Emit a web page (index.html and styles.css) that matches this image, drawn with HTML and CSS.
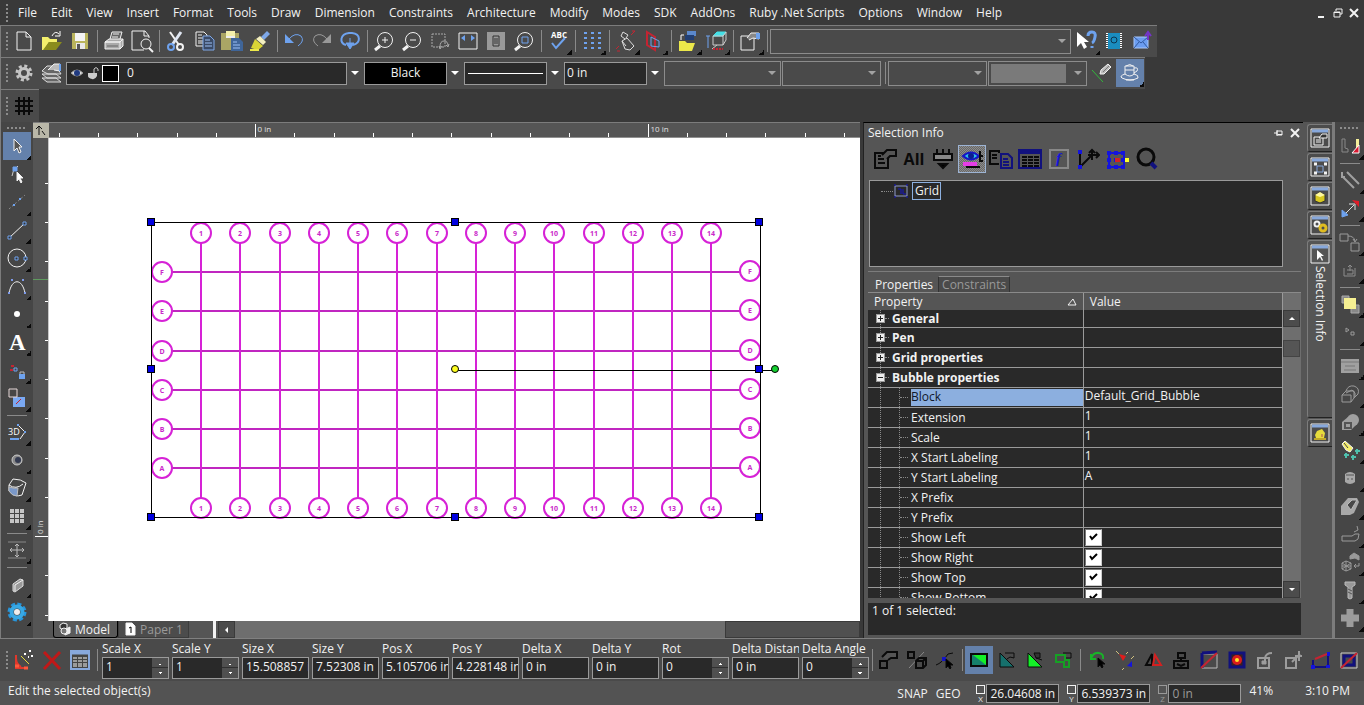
FILE: index.html
```html
<!DOCTYPE html>
<html lang="en">
<head>
  <meta charset="UTF-8">
  <title>Grid drawing</title>
  <link rel="stylesheet" href="styles.css">
</head>
<body>

  <header class="menubar">
    <span class="grip"></span>
    <nav class="menu">
      <a href="#">File</a>
      <a href="#">Edit</a>
      <a href="#">View</a>
      <a href="#">Insert</a>
      <a href="#">Format</a>
      <a href="#">Tools</a>
      <a href="#">Draw</a>
      <a href="#">Dimension</a>
      <a href="#">Constraints</a>
      <a href="#">Architecture</a>
      <a href="#">Modify</a>
      <a href="#">Modes</a>
      <a href="#">SDK</a>
      <a href="#">AddOns</a>
      <a href="#">Ruby .Net Scripts</a>
      <a href="#">Options</a>
      <a href="#">Window</a>
      <a href="#">Help</a>
    </nav>
    <div class="window-buttons">
      <button aria-label="Minimize"><svg viewBox="0 0 12 12"><path d="M2 10h6" stroke-width="2"/></svg></button>
      <button aria-label="Restore"><svg viewBox="0 0 12 12"><path d="M4 4V2h6v5H8M2 5h6v5H2zM2 5.500h6"/></svg></button>
      <button aria-label="Close"><svg viewBox="0 0 12 12"><path d="M2 2l8 8M10 2l-8 8" stroke-width="2"/></svg></button>
    </div>
  </header>

  <!-- standard toolbar -->
  <div class="toolbar">
    <span class="grip"></span>
    <button class="tool" aria-label="New"><svg viewBox="0 0 24 24"><path d="M5 3h9l5 5v13H5zM14 3v5h5"/></svg></button>
    <button class="tool" aria-label="Open"><svg viewBox="0 0 24 24" stroke="none"><path d="M2 8h6l2 2h7v3H9l-5 8H2z" fill="#f3ef6c"/><path d="M9 13h13l-6 8H3z" fill="#8a8c1c"/><path d="M12 7q3-6 7-2M20 2v5h-5" stroke="#fff"/></svg></button>
    <button class="tool" aria-label="Save"><svg viewBox="0 0 24 24" stroke="none"><path d="M4 4h16v16H4z" fill="#b9b45c"/><path d="M7 4h10v8H7z" fill="#f4f4f4"/><path d="M8 14h9v6H8z" fill="#e8e8e8"/><path d="M9 15h3v5H9z" fill="#555"/></svg></button>
    <span class="sep"></span>
    <button class="tool" aria-label="Print"><svg viewBox="0 0 24 24"><path d="M8 10l2-7h10l-2 7" fill="#666"/><path d="M3 13l4-3h14l-3 3zM3 13h15v7H3zM18 13l3-3v7l-3 3" fill="#aaa"/><path d="M11 5h6M10 8h6" stroke="#eee"/><path d="M5 17h11" stroke="#666"/></svg></button>
    <button class="tool" aria-label="Print preview"><svg viewBox="0 0 24 24"><path d="M19 9V7l-4-5H2v19h12M14 2v5h5"/><circle cx="16" cy="15" r="5"/><path d="M19 19l4 4" stroke-width="2"/></svg></button>
    <span class="sep"></span>
    <button class="tool" aria-label="Cut"><svg viewBox="0 0 24 24"><path d="M6 3l9 13" stroke-width="2"/><path d="M17 3L8 16" stroke="#dfe6f2" stroke-width="3"/><circle cx="7" cy="18" r="3" stroke="#6ea2ee" stroke-width="2"/><circle cx="16" cy="18" r="3" stroke-width="2"/></svg></button>
    <button class="tool" aria-label="Copy"><svg viewBox="0 0 24 24"><path d="M4 3h8l3 3v11H4z" fill="#444"/><path d="M6 6h4M6 9h6M6 12h6M6 14h6"/><path d="M11 7h7l4 4v10H11z" fill="#3a4a66" stroke="#7ea8e8"/><path d="M13 11h5M13 14h7M13 17h7" stroke="#9cc0f5"/></svg></button>
    <button class="tool" aria-label="Paste"><svg viewBox="0 0 24 24" stroke="none"><path d="M1 4h18v17H1z" fill="#aaa565"/><path d="M6 2h9v6H6z" fill="#f3efab"/><path d="M6 8h9" stroke="#eee" stroke-width="2"/><path d="M11 9h8l4 4v9H11z" fill="#3f6599"/><path d="M13 13h4M13 16h7M13 19h7" stroke="#9cc0f5"/></svg></button>
    <button class="tool" aria-label="Format painter"><svg viewBox="0 0 24 24" stroke="none"><path d="M19 2l3 3-6 6-3-3z" fill="#7ea8e8"/><path d="M12 7l6 6-3 3-7-6z" fill="#f3efc0"/><path d="M7 10l8 7-5 4-7-2z" fill="#d9d436"/><path d="M2 21h9" stroke="#ece84a" stroke-width="2"/></svg></button>
    <span class="sep"></span>
    <button class="tool" aria-label="Undo"><svg viewBox="0 0 24 24"><path d="M3 5v9h9z" fill="#6ea2ee" stroke="none"/><path d="M7 10q6-7 12-3 4 5-3 10" stroke="#6ea2ee"/></svg></button>
    <button class="tool" aria-label="Redo"><svg viewBox="0 0 24 24"><path d="M21 5v9h-9z" fill="#999" stroke="none"/><path d="M17 10q-6-7-12-3-4 5 3 10" stroke="#999"/></svg></button>
    <button class="tool" aria-label="Repeat"><svg viewBox="0 0 24 24"><path d="M8 16C1 14 2 5 11 4h3c9 1 9 10 1 12" stroke="#6ea2ee" stroke-width="2"/><path d="M12 9v10M8 14h8l-4 6z" fill="#6ea2ee" stroke="#6ea2ee"/></svg></button>
    <span class="sep"></span>
    <button class="tool" aria-label="Zoom in"><svg viewBox="0 0 24 24"><circle cx="13" cy="11" r="7.500"/><path d="M8 17l-5 4" stroke-width="3"/><path d="M10 11h6M13 8v6"/></svg></button>
    <button class="tool" aria-label="Zoom out"><svg viewBox="0 0 24 24"><circle cx="13" cy="11" r="7.500"/><path d="M8 17l-5 4" stroke-width="3"/><path d="M10 11h6"/></svg></button>
    <button class="tool" aria-label="Zoom window"><svg viewBox="0 0 24 24" stroke="#aaa"><path d="M4 5h13v13H4z" stroke-dasharray="2 1"/><path d="M12 18q0-6 4-6t4 5M18 16l2 2 1-3M11 17l1 3 2-3"/></svg></button>
    <button class="tool" aria-label="Zoom extents"><svg viewBox="0 0 24 24"><path d="M3 4h18v16H3z"/><path d="M5 9l4-3v6zM19 9l-4-3v6z" fill="#6ea2ee" stroke="none"/></svg></button>
    <button class="tool" aria-label="Zoom page"><svg viewBox="0 0 24 24" stroke="none"><path d="M3 3h18v18H3z" fill="#999"/><path d="M9 7h6v10H9zM10 10h4M10 12h4M10 14h4" stroke="#333"/></svg></button>
    <button class="tool" aria-label="Zoom selection"><svg viewBox="0 0 24 24"><circle cx="13" cy="11" r="7.500"/><path d="M8 17l-5 4" stroke-width="3"/><path d="M10 8h6v6h-6z" stroke="#6ea2ee"/></svg></button>
    <span class="sep"></span>
    <button class="tool fly" aria-label="Spelling"><svg viewBox="0 0 24 24"><text x="5" y="9" font-size="8" font-weight="700">ABC</text><path d="M6 14l4 5 9-10" stroke="#6ea2ee" stroke-width="2"/></svg></button>
    <span class="sep"></span>
    <button class="tool fly" aria-label="Snap grid"><svg viewBox="0 0 24 24"><path d="M4 4h17M4 9h17M4 14h17M4 19h17" stroke="#6ea2ee" stroke-width="2" stroke-dasharray="3 4"/></svg></button>
    <span class="sep"></span>
    <button class="tool fly" aria-label="Unlink"><svg viewBox="0 0 24 24"><path d="M8 12l5-3 7 8-4 4-5-1zM11 10L7 7l2-4 5 3-2 3M8 12l4 5" stroke="#ddd"/><path d="M17 6l4-4M21 2h-3M2 20l3-3M3 22h3" stroke="#c42432"/></svg></button>
    <button class="tool fly" aria-label="Mirror plane"><svg viewBox="0 0 24 24"><path d="M5 3l8 5v13l-8-5z" stroke="#c42432" stroke-width="2"/><path d="M9 8l8 4v6l-8-1z" stroke="#6ea2ee"/></svg></button>
    <span class="sep"></span>
    <button class="tool fly" aria-label="Library"><svg viewBox="0 0 24 24" stroke="none"><path d="M3 12h6l2 2h8l-3 8H3z" fill="#ece84a"/><path d="M11 2h9v5h-9z" fill="#5b88cc"/><path d="M9 6h9v5H9z" fill="#223f73"/><path d="M5 11V6h3" stroke="#fff"/></svg></button>
    <button class="tool fly" aria-label="Work plane"><svg viewBox="0 0 24 24"><path d="M9 7l4-4h9l-3 4z" fill="#45e0e6" stroke="#45e0e6"/><path d="M9 7h10v9H9zM19 7l3-4v8l-3 5M13 16l-5 4" stroke="#ccc"/><path d="M4 7v12M2 7h4" stroke="#6ea2ee"/><path d="M9 20h10" stroke="#c42432" stroke-width="2" stroke-dasharray="2 1"/></svg></button>
    <span class="sep"></span>
    <button class="tool fly" aria-label="Properties"><svg viewBox="0 0 24 24"><path d="M3 7h13v14H3z"/><path d="M9 9l4-5h8v6l-6-1-4 2" fill="#888"/><path d="M18 4h4v6h-4z" fill="#6ea2ee" stroke="none"/></svg></button>
    <span class="sep"></span>
    <label class="combo combo-style"><select aria-label="Style"><option></option></select></label>
    <button class="tool fly" aria-label="Context help"><svg viewBox="0 0 24 24" stroke="none"><path d="M3 3v15l4-4 3 6 3-2-3-5h5z" fill="#fff"/><path d="M14 7q0-4 4-4t3 5-3 6M18 17v2" stroke="#6ea2ee" stroke-width="3"/></svg></button>
    <button class="tool" aria-label="Handbook"><svg viewBox="0 0 24 24" stroke="none"><path d="M6 4h12v16H6z" fill="#1a8dc0"/><path d="M5 4v16M19 4v16" stroke="#fff" stroke-width="2" stroke-dasharray="1 1"/><circle cx="12" cy="11" r="3" stroke="#0c3550"/></svg></button>
    <button class="tool" aria-label="Send"><svg viewBox="0 0 24 24"><path d="M4 8h14v11H4z" fill="#6b9df0" stroke="#a9c7fa"/><path d="M4 8l7 6 7-6M4 19l5-6M18 19l-5-6" stroke="#31599f"/><path d="M18 11V5M15 7l3-4 3 4" stroke="#7334c9" stroke-width="2"/></svg></button>
  </div>

  <!-- layer and pen toolbar -->
  <div class="toolbar">
    <span class="grip"></span>
    <button class="tool" aria-label="Settings"><svg viewBox="0 0 24 24" stroke="#c4c4c4"><circle cx="12" cy="12" r="4.500" stroke-width="3"/><circle cx="12" cy="12" r="7" stroke-width="3" stroke-dasharray="3 2.500"/></svg></button>
    <button class="tool" aria-label="Layers"><svg viewBox="0 0 24 24"><path d="M2 17l5 4h14l-5-4zM2 13l5 4h14l-5-4zM2 10l5-5h9l5 8H8z" fill="#666" stroke="#ddd"/><path d="M8 9l6-6h6v7l-6-1" fill="#bbb"/><path d="M20 3v7" stroke="#6ea2ee" stroke-width="2"/></svg></button>
    <div class="layer">
      <svg viewBox="0 0 14 14"><path d="M1 7q6-6 12 0-6 6-12 0z" fill="#ddd" stroke="#999"/><circle cx="7" cy="7" r="3" fill="#203a80" stroke="none"/></svg>
      <svg viewBox="0 0 14 14"><path d="M8 7V3q2-3 4 0v2" stroke="#ccc"/><path d="M2 7h9v3q-2 4-5 3-4-1-4-3z" fill="#ccc" stroke="none"/></svg>
      <span class="swatch"></span>
      <select aria-label="Layer"><option>0</option></select>
    </div>
    <span class="arrow"></span>
    <label class="pen"><select class="pen-color" aria-label="Pen color"><option>Black</option></select></label>
    <span class="arrow"></span>
    <button class="pen pen-line" aria-label="Line style"><span></span></button>
    <span class="arrow"></span>
    <label class="pen"><select aria-label="Pen width"><option>0 in</option></select></label>
    <span class="arrow"></span>
    <label class="combo combo-wide"><select disabled aria-label="Hatch"><option></option></select></label>
    <label class="combo"><select disabled aria-label="Hatch scale"><option></option></select></label>
    <span class="sep"></span>
    <label class="combo"><select disabled aria-label="Brush"><option></option></select></label>
    <label class="combo combo-fill"><select disabled aria-label="Fill"><option></option></select></label>
    <button class="tool" aria-label="Sketch"><svg viewBox="0 0 24 24"><path d="M2 9l11 12" stroke="#32b93c"/><path d="M10 13l1-4 7-6 3 3-7 7z" fill="#bbb"/><path d="M13 11l6-6" stroke="#777"/></svg></button>
    <button class="tool fly active" aria-label="Render"><svg viewBox="0 0 24 24"><path d="M7 5h9v8q-4 4-9 0zM16 7q5-1 3 3l-3 2M7 9h9M8 5q4-3 7 0"/><path d="M7 13q-6 2-3 4 8 4 16 0 1-3-4-4M8 19h8"/></svg></button>
  </div>

  <div class="toolbar toolbar-grid">
    <span class="grip"></span>
    <button class="tool" aria-label="Grid"><svg viewBox="0 0 24 24" stroke="#0a0a0a"><path d="M7 3v18M12 3v18M17 3v18M3 7h18M3 12h18M3 17h18" stroke-width="2"/></svg></button>
  </div>

  <main class="workspace">

    <div class="side-toolbar">
      <span class="grip grip-flat"></span>
      <button class="tool fly active" aria-label="Select"><svg viewBox="0 0 24 24"><path d="M9 5v12l3-3 2 5 2-1-2-5h3z" fill="#555"/></svg></button>
      <button class="tool" aria-label="Edit node"><svg viewBox="0 0 24 24"><path d="M7 14q0-6 6-10" stroke="#ccc"/><path d="M8 5h4v4H8z" fill="#6ea2ee" stroke="#6ea2ee"/><path d="M12 10v9l2-2 2 4 1-1-2-4h3z" fill="#fff"/></svg></button>
      <button class="tool fly" aria-label="Construction"><svg viewBox="0 0 24 24"><path d="M4 19L20 5" stroke="#888" stroke-dasharray="2 2"/><path d="M8 15h2M14 9h2" stroke="#6ea2ee" stroke-width="2"/></svg></button>
      <button class="tool fly" aria-label="Line"><svg viewBox="0 0 24 24"><path d="M4 20L20 5"/><path d="M3 18h3v3H3zM18 4h3v3h-3z" fill="#333" stroke="#6ea2ee"/></svg></button>
      <button class="tool fly" aria-label="Circle"><svg viewBox="0 0 24 24"><circle cx="12" cy="12" r="9"/><path d="M10 11h3v3h-3zM19 11h3v3h-3z" fill="#333" stroke="#6ea2ee"/></svg></button>
      <button class="tool fly" aria-label="Curve"><svg viewBox="0 0 24 24"><path d="M4 19C7 4 17 4 20 19"/><path d="M6 6h2M17 6h2M3 19h2M19 19h2" stroke="#7f9bea" stroke-width="2"/></svg></button>
      <button class="tool fly" aria-label="Point"><svg viewBox="0 0 24 24"><circle cx="12" cy="12" r="3" fill="#fff" stroke="none"/></svg></button>
      <button class="tool fly" aria-label="Text"><svg viewBox="0 0 24 24"><text class="serif" x="4" y="20" font-size="23">A</text></svg></button>
      <button class="tool fly" aria-label="Constraint"><svg viewBox="0 0 24 24"><path d="M5 12h3M6 8h3" stroke="#c42432" stroke-width="2"/><path d="M9 10h3v3H9z" stroke="#6ea2ee"/><path d="M15 17v-3h4v3" stroke="#bbb"/><path d="M14 16h6v5h-6z" fill="#6ea2ee" stroke="none"/></svg></button>
      <button class="tool fly" aria-label="Transform"><svg viewBox="0 0 24 24"><path d="M8 11h12v10H8z" fill="#7aa9f3" stroke="none"/><path d="M4 3h8v8H4z" stroke="#e6d8d8" fill="#464646"/><path d="M11 18l5-5" stroke="#c42432"/></svg></button>
      <span class="sep"></span>
      <button class="tool fly" aria-label="3D polyline"><svg viewBox="0 0 24 24"><text x="3" y="15" font-size="9">3D</text><path d="M13 5l7 7-5 7"/><path d="M5 19h9M12 5h2M19 12h2" stroke="#6ea2ee" stroke-width="2"/></svg></button>
      <button class="tool fly" aria-label="Sphere"><svg viewBox="0 0 24 24"><circle cx="12" cy="12" r="5" fill="#888" stroke="#ccc"/><circle cx="13" cy="12" r="3" fill="#333a50" stroke="none"/></svg></button>
      <button class="tool fly" aria-label="Cylinder"><svg viewBox="0 0 24 24"><path d="M4 9l4-6q8 0 13 4l-4 12q-8 3-13-4z"/><path d="M4 11q6 2 9 1l-1 8q-5 0-8-5z" fill="#7a98c8" stroke="#bbb"/><path d="M4 9q7 5 14-1"/></svg></button>
      <button class="tool fly" aria-label="Array"><svg viewBox="0 0 24 24"><path d="M5 7h14M5 12h14M5 17h14" stroke="#c6c6c6" stroke-width="4" stroke-dasharray="4 1"/></svg></button>
      <span class="sep"></span>
      <button class="tool fly" aria-label="Pan"><svg viewBox="0 0 24 24" stroke="#bbb"><path d="M3 4h18M3 20h18" stroke="#888"/><path d="M12 6v13M5 12h14M10 8l2-2 2 2M10 17l2 2 2-2M7 10l-2 2 2 2M17 10l2 2-2 2"/></svg></button>
      <span class="sep"></span>
      <button class="tool fly" aria-label="Wall"><svg viewBox="0 0 24 24"><path d="M8 12l7-5 3 1v6l-8 6-2-1z" fill="#999" stroke="#ddd"/><path d="M10 19v-6l8-5"/></svg></button>
      <button class="tool fly" aria-label="Gear"><svg viewBox="0 0 24 24"><circle cx="12" cy="12" r="8" stroke="#2796dc" stroke-width="3" stroke-dasharray="4 2.300"/><circle cx="12" cy="12" r="5.500" stroke="#38a8e4" stroke-width="4"/><circle cx="12" cy="12" r="3" fill="#eee" stroke="none"/></svg></button>
    </div>

    <section class="drawing">
      <div class="rulers">
        <span class="ruler-origin"><svg viewBox="0 0 14 14"><path d="M3 6l3-3 3 3M6 3v9M9 8l3 4" stroke="#111"/></svg></span>
        <svg class="ruler-top" id="rulerTop"></svg>
        <svg class="ruler-left" id="rulerLeft"></svg>
        <svg class="canvas" id="canvas"></svg>
      </div>
      <div class="sheets">
        <button class="sheet sheet-active"><svg viewBox="0 0 14 14"><path d="M2 3l3-2 4 1v4L5 8 2 6z" fill="#333"/><path d="M6 8l6-3v6l-5 2z" fill="#eee"/><circle cx="6" cy="9" r="3" fill="#777"/></svg>Model</button>
        <button class="sheet"><svg viewBox="0 0 14 14"><path d="M3 1h6l3 3v9H3z" fill="#fff"/><path d="M6 6l2-1v6" stroke="#000"/></svg>Paper 1</button>
        <span class="splitter"></span>
        <button class="scroll-button left" aria-label="Scroll left"></button>
        <span class="h-track"></span>
        <span class="h-thumb"></span>
      </div>
    </section>

    <section class="panel">
      <div class="panel-title">
        <h1>Selection Info</h1>
        <button aria-label="Pin"><svg viewBox="0 0 12 12"><path d="M1 6h3M4 3v6M4 4h5v4H4zM5 7.500h4"/></svg></button>
        <button aria-label="Close panel"><svg viewBox="0 0 12 12"><path d="M2 2l8 8M10 2l-8 8" stroke-width="2"/></svg></button>
      </div>
      <div class="panel-tools">
        <button class="tool" aria-label="Selector properties"><svg viewBox="0 0 24 24"><path d="M2 6h13v15H2zM5 12h6M5 16h7M5 9h3"/><path d="M9 8l5-5h9v6h-6l-3 3" fill="#555"/></svg></button>
        <button class="tool tool-text">All</button>
        <button class="tool" aria-label="Collapse"><svg viewBox="0 0 24 24"><path d="M3 7h18v6H3z" fill="#888"/><path d="M6 2v5M12 2v5M18 2v5"/><path d="M8 17h8l-4 4z" fill="#000"/></svg></button>
        <button class="tool pressed" aria-label="Show"><svg viewBox="0 0 24 24"><path d="M3 9q8-7 16 0-8 7-16 0z" fill="#2ebfe8" stroke="#1414c8"/><circle cx="11" cy="9" r="3" fill="#0c1c90" stroke="none"/><path d="M3 17h14" stroke="#e63ee6" stroke-width="4"/><path d="M6 20h14M20 4v10h3M20 9h3"/></svg></button>
        <button class="tool" aria-label="Copy properties"><svg viewBox="0 0 24 24"><path d="M10 17H1V4h9v2M3 8h5M3 11h5"/><path d="M12 7h7l4 4v10H12zM14 12h5M14 15h6M14 18h6" stroke="#11117d"/></svg></button>
        <button class="tool" aria-label="Table"><svg viewBox="0 0 24 24"><path d="M1 3h22v18H1z" stroke="#11117d"/><path d="M1 5h22" stroke="#11117d" stroke-width="4"/><path d="M4 10h17M4 13h17M4 16h17M4 19h17" stroke-dasharray="5 1"/></svg></button>
        <button class="tool" aria-label="Formula"><svg viewBox="0 0 24 24"><path d="M3 3h18v18H3z" stroke="#888"/><text class="serif formula" x="9" y="16" font-size="15">f</text></svg></button>
        <button class="tool" aria-label="Coordinates"><svg viewBox="0 0 24 24"><path d="M4 6v14L16 8M12 8h11M16 4v9M13 6l3-3 3 3M20 5l3 3-3 3"/><path d="M3 4h2v2H3zM3 19h2v2H3z" stroke="#1414dc"/></svg></button>
        <button class="tool" aria-label="Reference point"><svg viewBox="0 0 24 24"><path d="M4 6h15v14H4z" stroke="#1414dc"/><path d="M2 6h19M2 13h19M2 20h19" stroke="#1414dc" stroke-width="4" stroke-dasharray="4 3"/><path d="M10 11h5v4h-5z" fill="#d42222" stroke="none"/><path d="M20 11h4v4h-4z" fill="#ffff28" stroke="none"/></svg></button>
        <button class="tool" aria-label="Find"><svg viewBox="0 0 24 24"><circle cx="12" cy="10" r="8" stroke-width="3"/><path d="M17 16l5 5" stroke="#11117d" stroke-width="4"/></svg></button>
      </div>
      <div class="tree">
        <span class="tree-line"></span>
        <svg viewBox="0 0 16 14"><path d="M2 2h12v10H2z" stroke="#8f9bc8"/><path d="M1 1h2M13 1h2M1 13h2M13 13h2M5 5h3v5M10 5v5h3" stroke="#1414c8"/></svg>
        <span class="tree-label">Grid</span>
      </div>
      <div class="panel-tabs">
        <button class="panel-tab panel-tab-active">Properties</button>
        <button class="panel-tab">Constraints</button>
      </div>
      <div class="props">
        <div class="props-view">
          <table>
            <thead>
              <tr><th><div class="prop-head">Property <svg viewBox="0 0 10 8"><path d="M1 7h8L6 1z"/></svg></div></th><th>Value</th></tr>
            </thead>
            <tbody>
              <tr class="group first"><td><div><i></i>General</div></td><td></td></tr>
              <tr class="group"><td><div><i></i>Pen</div></td><td></td></tr>
              <tr class="group"><td><div><i></i>Grid properties</div></td><td></td></tr>
              <tr class="group open"><td><div><i></i>Bubble properties</div></td><td></td></tr>
              <tr class="selected"><td><div><span>Block</span></div></td><td>Default_Grid_Bubble</td></tr>
              <tr><td><div>Extension</div></td><td>1</td></tr>
              <tr><td><div>Scale</div></td><td>1</td></tr>
              <tr><td><div>X Start Labeling</div></td><td>1</td></tr>
              <tr><td><div>Y Start Labeling</div></td><td>A</td></tr>
              <tr><td><div>X Prefix</div></td><td></td></tr>
              <tr><td><div>Y Prefix</div></td><td></td></tr>
              <tr><td><div><label for="showLeft">Show Left</label></div></td><td><input type="checkbox" id="showLeft" checked></td></tr>
              <tr><td><div><label for="showRight">Show Right</label></div></td><td><input type="checkbox" id="showRight" checked></td></tr>
              <tr><td><div><label for="showTop">Show Top</label></div></td><td><input type="checkbox" id="showTop" checked></td></tr>
              <tr><td><div><label for="showBottom">Show Bottom</label></div></td><td><input type="checkbox" id="showBottom" checked></td></tr>
            </tbody>
          </table>
        </div>
        <div class="v-scroll">
          <button class="scroll-button up" aria-label="Scroll up"></button>
          <span class="v-thumb"></span>
          <button class="scroll-button down" aria-label="Scroll down"></button>
        </div>
      </div>
      <p class="panel-status">1 of 1 selected:</p>
    </section>

    <div class="side-tabs">
      <button class="side-tab" aria-label="Properties palette"><svg viewBox="0 0 20 20"><path d="M1 1h18v18H1z"/><path d="M2 3h16" stroke="#87a8dc" stroke-width="3"/><path d="M4 9h9v8H4zM6 12h5M6 14h5"/><path d="M9 10l3-4h5v4z" fill="#333"/></svg></button>
      <button class="side-tab" aria-label="Blocks palette"><svg viewBox="0 0 20 20"><path d="M1 1h18v18H1z"/><path d="M2 3h16" stroke="#87a8dc" stroke-width="3"/><path d="M7 9h6v6H7z" stroke="#87a8dc"/><path d="M4 7h3M14 7h3M4 16h3M14 16h3" stroke-width="3"/></svg></button>
      <button class="side-tab" aria-label="Library palette"><svg viewBox="0 0 20 20"><path d="M1 1h18v18H1z"/><path d="M2 3h16" stroke="#87a8dc" stroke-width="3"/><path d="M5 9l5-3 5 3v6l-5 2-5-2z" fill="#d8c820" stroke="#333"/><path d="M5 9l5 2 5-2-5-3z" fill="#fff8a0" stroke="none"/></svg></button>
      <button class="side-tab" aria-label="Settings palette"><svg viewBox="0 0 20 20"><path d="M1 1h18v18H1z"/><path d="M2 3h16" stroke="#87a8dc" stroke-width="3"/><circle cx="7" cy="9" r="2.500" stroke-width="2"/><circle cx="13" cy="13" r="3" stroke="#e0bc20" stroke-width="3"/></svg></button>
      <button class="side-tab side-tab-active"><svg viewBox="0 0 20 20"><path d="M1 1h18v18H1z"/><path d="M2 3h16" stroke="#87a8dc" stroke-width="3"/><path d="M7 6v10l3-3 2 4 1-1-2-4h3z" fill="#fff" stroke="none"/></svg><span>Selection Info</span></button>
      <button class="side-tab" aria-label="Render palette"><svg viewBox="0 0 20 20"><path d="M1 1h18v18H1z"/><path d="M2 3h16" stroke="#87a8dc" stroke-width="3"/><path d="M7 8l5-2 3 4-1 5H6l-1-3z" fill="#e6dc3c" stroke="none"/><path d="M4 16h12" stroke="#c0a828" stroke-width="2"/><path d="M12 11v3" stroke="#b05050"/></svg></button>
    </div>

    <div class="side-toolbar side-toolbar-right">
      <span class="grip grip-flat"></span>
      <button class="tool fly" aria-label="Corner"><svg viewBox="0 0 24 24"><path d="M4 5v13h6v-3l-3-1V5z" stroke="#888"/><path d="M18 5h3v10h-3z" fill="#f4ef9a" stroke="none"/><path d="M21 11v8h-7z" fill="#d81830" stroke="#fff"/></svg></button>
      <span class="sep"></span>
      <button class="tool fly" aria-label="Parallel"><svg viewBox="0 0 24 24" stroke="#a0a0a0"><path d="M4 8l12 12M9 4l12 12M4 4v5h3" stroke-width="2"/></svg></button>
      <button class="tool fly" aria-label="Stretch"><svg viewBox="0 0 24 24"><path d="M14 4l7 1v6z" fill="#e01c28" stroke="none"/><path d="M8 17l8-8M11 8h6v6" stroke="#ddd"/><path d="M4 14l6 5-6 2z" fill="#6ea2ee" stroke="#6ea2ee"/></svg></button>
      <span class="sep"></span>
      <button class="tool fly" aria-label="Move copy"><svg viewBox="0 0 24 24" stroke="#9a9a9a"><path d="M2 4h8v7H2zM13 13h8v8h-8zM10 6q6 0 7 5M15 9l2 3 2-3"/></svg></button>
      <button class="tool fly" aria-label="Export"><svg viewBox="0 0 24 24" stroke="#8c8c8c"><path d="M6 10v8h11v-8M9 12h6v4H9M12 13V7M10 9l2-2 2 2"/></svg></button>
      <span class="sep"></span>
      <button class="tool fly" aria-label="Bring to front"><svg viewBox="0 0 24 24" stroke="#aaa"><path d="M4 4h7v7H4zM13 13h8v8h-8z" fill="#888"/><path d="M6 6h12v11H6z" fill="#f6f092" stroke="none"/></svg></button>
      <button class="tool fly" aria-label="Node shift"><svg viewBox="0 0 24 24" stroke="#9a9a9a"><path d="M8 8v4l3-2zM13 12h3v3h-3z"/></svg></button>
      <span class="sep"></span>
      <button class="tool fly" aria-label="Brick"><svg viewBox="0 0 24 24" stroke="none"><path d="M3 5h18v14H3z" fill="#a0a0a0"/><path d="M3 8h18M7 12h10M6 16h12" stroke="#777"/></svg></button>
      <button class="tool fly" aria-label="Extrude"><svg viewBox="0 0 24 24" stroke="#9a9a9a"><path d="M4 13l4-4h8v7l-3 4H4zM4 13h9v7M8 9q2-6 8-5 6 2 4 8l-4 4M8 11l6-3 3 3v4"/></svg></button>
      <button class="tool fly" aria-label="Boolean"><svg viewBox="0 0 24 24"><path d="M4 12l6-5h8v8l-5 5H4z" fill="#a0a0a0" stroke="none"/><circle cx="15" cy="10" r="6" fill="#a0a0a0" stroke="none"/><path d="M7 13h6v5H7z" stroke="#555" stroke-width="2"/></svg></button>
      <button class="tool fly" aria-label="Paint"><svg viewBox="0 0 24 24"><path d="M4 6l3-3 8 7-3 4-4-2z" fill="#f4ee6a"/><path d="M6 5l4 5" stroke="#444"/><path d="M8 15v5M6 17h5M15 17v5M13 19h5M19 11v5M17 13h5" stroke="#4ec0ac" stroke-width="2"/></svg></button>
      <button class="tool fly" aria-label="Barrel"><svg viewBox="0 0 24 24" stroke="none"><path d="M7 8q5-4 10 0v8q-5 4-10 0z" fill="#a8a8a8"/><path d="M8 9h8M9 13h2M13 13h2" stroke="#555"/></svg></button>
      <button class="tool fly" aria-label="Slot"><svg viewBox="0 0 24 24"><path d="M3 12l7-8h9l2 4-5 11-4 2H3z" fill="#a8a8a8" stroke="none"/><path d="M9 11l5-5h5l-6 10z" fill="#484848" stroke="#bbb"/></svg></button>
      <button class="tool fly" aria-label="Bend"><svg viewBox="0 0 24 24" stroke="#9a9a9a"><path d="M4 14h10l3-2h4l-1 5-3 2H4zM16 10l4-2-1-4"/></svg></button>
      <button class="tool fly" aria-label="Explode"><svg viewBox="0 0 24 24" stroke="#9a9a9a"><path d="M4 13l4-2 5 2v6l-5 2-4-2zM8 11v10M4 16h9M4 13l9 6M13 13l-9 6"/><path d="M12 6l4-3 5 3v4l-4-2-5 1z" fill="#9a9a9a"/><path d="M21 13v3h-5M18 14l-2 2 2 2"/></svg></button>
      <button class="tool fly" aria-label="Screw"><svg viewBox="0 0 24 24"><path d="M7 4h10v3l-3 2v11l-2 1-2-1V9L7 7z" fill="#999" stroke="#bbb"/><path d="M10 11l4 2M10 14l4 2" stroke="#555"/></svg></button>
      <button class="tool fly" aria-label="Add"><svg viewBox="0 0 24 24"><path d="M12 3v18M3 12h18" stroke="#9c9c9c" stroke-width="7"/></svg></button>
    </div>
  </main>

  <!-- inspector bar -->
  <div class="inspector">
    <span class="grip"></span>
    <button class="tool" aria-label="Edit tool"><svg viewBox="0 0 24 24"><path d="M4 7v13h11M4 10q0 6 5 9" stroke="#e0382c" stroke-width="2"/><path d="M3 18h4M12 20h4" stroke="#ff5a3c" stroke-width="3"/><path d="M9 8l8 8" stroke="#e6dc3c"/><path d="M12 6h2M17 3h2M19 8h2M16 9h1" stroke="#fff" stroke-width="2"/></svg></button>
    <button class="tool" aria-label="Cancel"><svg viewBox="0 0 24 24"><path d="M4 4l16 17M20 4L4 21" stroke="#c01818" stroke-width="3"/></svg></button>
    <button class="tool" aria-label="Data table"><svg viewBox="0 0 24 24"><path d="M3 3h18v18H3z" fill="#444" stroke="#87a8dc" stroke-width="2"/><path d="M3 5h18" stroke="#87a8dc" stroke-width="3"/><path d="M5 10h14M5 13h14M5 16h14M5 18h14" stroke-dasharray="4 1"/></svg></button>
    <span class="sep"></span>
    <div class="fields">
      <label class="field"><span>Scale X</span><span class="box"><input type="text" value="1"><i class="spin"></i></span></label>
      <label class="field"><span>Scale Y</span><span class="box"><input type="text" value="1"><i class="spin"></i></span></label>
      <label class="field"><span>Size X</span><span class="box"><input type="text" value="15.508857 in"></span></label>
      <label class="field"><span>Size Y</span><span class="box"><input type="text" value="7.52308 in"></span></label>
      <label class="field"><span>Pos X</span><span class="box"><input type="text" value="5.105706 in"></span></label>
      <label class="field"><span>Pos Y</span><span class="box"><input type="text" value="4.228148 in"></span></label>
      <label class="field"><span>Delta X</span><span class="box"><input type="text" value="0 in"></span></label>
      <label class="field"><span>Delta Y</span><span class="box"><input type="text" value="0 in"></span></label>
      <label class="field"><span>Rot</span><span class="box"><input type="text" value="0"><i class="spin"></i></span></label>
      <label class="field"><span>Delta Distance</span><span class="box"><input type="text" value="0 in"></span></label>
      <label class="field"><span>Delta Angle</span><span class="box"><input type="text" value="0"><i class="spin"></i></span></label>
    </div>
    <span class="sep"></span>
    <div class="inspector-tools">
      <button class="tool" aria-label="Select by"><svg viewBox="0 0 24 24"><path d="M3 13h7v7H3z" stroke-width="2"/><path d="M5 9l5-5h10v6h-6l-3 2" fill="#555" stroke-width="2"/></svg></button>
      <button class="tool" aria-label="2D 3D"><svg viewBox="0 0 24 24"><path d="M3 4h6v6H3z" stroke-width="2"/><path d="M4 20L19 4" stroke="#888"/><path d="M11 13l3-3h7v7l-3 3h-7zM11 13h7v7M18 13l3-3" stroke-width="2"/></svg></button>
      <button class="tool" aria-label="Node edit"><svg viewBox="0 0 24 24"><path d="M3 17q6-2 12-11l5-1"/><path d="M9 9h4v4H9z" fill="#1414c8" stroke="none"/><path d="M13 11v9l2-2 2 3 1-1-1-3h3z" fill="#000"/></svg></button>
      <span class="sep"></span>
      <button class="tool active" aria-label="Select inside"><svg viewBox="0 0 24 24"><path d="M4 6h16v12H4z" fill="#16806c" stroke-width="2"/><path d="M6 7h13v10z" fill="#14f028" stroke="none"/></svg></button>
      <button class="tool" aria-label="Select crossing"><svg viewBox="0 0 24 24"><path d="M5 5v14h14z" fill="#16706c"/><path d="M10 5h9v5l-4-1-3 2"/></svg></button>
      <button class="tool" aria-label="Select polygon"><svg viewBox="0 0 24 24"><path d="M5 5v14h14z" fill="#14f028"/><path d="M11 5h6v5h-4zM13 10l6 2" fill="#333"/></svg></button>
      <button class="tool" aria-label="Select fence"><svg viewBox="0 0 24 24"><path d="M5 7h9v5h4v7h-5v-5H5z" stroke="#16a024" stroke-width="2"/><path d="M12 5h8v5h-5"/></svg></button>
      <span class="sep"></span>
      <button class="tool" aria-label="Rotate selection"><svg viewBox="0 0 24 24"><path d="M6 11q2-7 8-6 5 1 4 6M6 6v5h5" stroke="#18b428" stroke-width="2"/><path d="M13 10v9l2-2 2 3 1-1-1-3h3z" fill="#000"/></svg></button>
      <button class="tool" aria-label="Assemble"><svg viewBox="0 0 24 24"><path d="M6 6l7 2-3 5z" fill="#e01c1c" stroke="none"/><path d="M14 18l5-5v6z" fill="#1414dc" stroke="none"/><path d="M3 3l3 3M13 6l2-2M11 20l-2 2M18 11l3-3" stroke="#d0c080"/></svg></button>
      <button class="tool" aria-label="Mirror"><svg viewBox="0 0 24 24"><path d="M5 17h6V6z" stroke-width="2"/><path d="M12 17h8L14 7z" stroke="#d42020" stroke-width="2"/></svg></button>
      <button class="tool" aria-label="Stamp"><svg viewBox="0 0 24 24"><path d="M9 5h7v5H9zM5 13h14v7H5zM12 10v3M8 16l4 2 4-2" stroke-width="2"/></svg></button>
      <button class="tool" aria-label="No frame"><svg viewBox="0 0 24 24"><path d="M5 6h15v14H5z" stroke="#bbb"/><path d="M5 5l15-1M5 5v15" stroke="#11117d" stroke-width="3"/><path d="M4 20L20 5" stroke="#c42432" stroke-width="2"/></svg></button>
      <button class="tool" aria-label="Center"><svg viewBox="0 0 24 24"><path d="M5 5h14v14H5z" fill="#3c2020" stroke="#11117d" stroke-width="3"/><circle cx="12" cy="12" r="5" fill="#d81c1c" stroke="none"/><circle cx="12" cy="12" r="2" fill="#ffe628" stroke="none"/></svg></button>
      <button class="tool" aria-label="Rotate node"><svg viewBox="0 0 24 24" stroke="#9c9c9c"><path d="M5 10h11v10H5zM12 14v-4q1-5 7-5" stroke-width="2"/><path d="M9 13h4v3H9z" fill="#9c9c9c"/></svg></button>
      <button class="tool" aria-label="Move node"><svg viewBox="0 0 24 24" stroke="#9c9c9c"><path d="M5 10h10v10H5zM11 14l8-8M14 8h7M18 3v10" stroke-width="2"/></svg></button>
      <button class="tool" aria-label="Skew"><svg viewBox="0 0 24 24"><path d="M4 18V12M4 19h15V6" stroke="#11117d" stroke-width="2"/><path d="M6 11l12-5" stroke="#c42432" stroke-width="2"/><path d="M2 17h4v4H2zM18 4h3v4h-3zM17 17h4v3h-4z" fill="#1414dc" stroke="none"/></svg></button>
      <button class="tool" aria-label="Frame off"><svg viewBox="0 0 24 24"><path d="M4 5h16v15H4z" stroke="#ccc"/><path d="M7 8h10v9H7z" stroke="#11117d" stroke-width="3"/><path d="M4 20L20 5" stroke="#c42432" stroke-width="2"/></svg></button>
    </div>
  </div>

  <footer class="statusbar">
    <span class="hint">Edit the selected object(s)</span>
    <button>SNAP</button>
    <button>GEO</button>
    <label class="coord"><span class="axis">X</span><input type="text" value="26.04608 in"></label>
    <label class="coord"><span class="axis">Y</span><input type="text" value="6.539373 in"></label>
    <label class="coord coord-off"><span class="axis">Z</span><input type="text" value="0 in" disabled></label>
    <span class="zoom">41%</span>
    <span class="clock">3:10 PM</span>
  </footer>

  <script src="script.js"></script>
</body>
</html>
```

FILE: styles.css
```css
* {
  box-sizing: border-box;
}
body {
  margin: 0;
  min-height: 100vh;
  display: flex;
  flex-direction: column;
  background-color: #393939;
  color: #f2f2f2;
  font-family: "Open Sans", "Noto Sans", sans-serif;
  font-size: 12px;
  line-height: 16px;
  fill: none;
  stroke: #f2f2f2;
}
button, input, select {
  margin: 0;
  padding: 0;
  border: none;
  border-radius: 0;
  background: none;
  color: inherit;
  font: inherit;
}
select {
  appearance: none;
  width: 100%;
  opacity: 1;
}
svg {
  display: block;
  flex: none;
}
svg text {
  fill: #fff;
  stroke: none;
}
.serif {
  font-family: "Liberation Serif", serif;
  font-weight: 700;
}

/* grips and separators */
.grip {
  flex: none;
  width: 2px;
  height: 18px;
  margin: 0 2px 0 6px;
  background: repeating-linear-gradient(#8c8c8c 0 2px, transparent 2px 4px);
}
.grip-flat {
  width: 18px;
  height: 2px;
  margin: 4px 0 3px 4px;
  background: repeating-linear-gradient(90deg, #8c8c8c 0 2px, transparent 2px 4px);
}
.sep {
  flex: none;
  width: 1px;
  height: 22px;
  margin: 0 2px 0 3px;
  background-color: #8a8a8a;
}

/* menu */
.menubar {
  display: flex;
  align-items: center;
  height: 25px;
}
.menu {
  display: flex;
  flex: 1;
  gap: 14px;
  padding-left: 8px;
}
.menu a {
  color: inherit;
  text-decoration: none;
  white-space: nowrap;
}
.window-buttons {
  display: flex;
  gap: 4px;
  padding-right: 4px;
}
.window-buttons svg, .panel-title svg {
  width: 12px;
  height: 12px;
}

/* toolbars */
.toolbar {
  display: flex;
  align-items: center;
  align-self: flex-start;
  height: 32px;
  padding: 0 1px 1px 0;
  background-color: #4a4a4a;
  border-top: 1px solid #7c7c7c;
  border-left: 1px solid #7c7c7c;
}
.toolbar .grip {
  margin-left: 5px;
}
.toolbar-grid {
  height: 33px;
}
.tool {
  flex: none;
  display: flex;
  align-items: center;
  justify-content: center;
  width: 28px;
  height: 28px;
}
.tool svg {
  width: 24px;
  height: 24px;
}
.fly {
  background: linear-gradient(135deg, transparent 50%, #0a0a0a 50%) right bottom / 5px 5px no-repeat;
}
.active {
  background-color: #6481ab;
}
.arrow {
  flex: none;
  width: 17px;
  height: 6px;
  background-color: #fff;
  clip-path: polygon(4px 1px, 12px 1px, 8px 5px);
}
.layer {
  display: flex;
  align-items: center;
  gap: 2px;
  width: 281px;
  height: 23px;
  padding-left: 3px;
  background-color: #292929;
  border: 1px solid #9a9a9a;
}
.layer svg {
  width: 14px;
  height: 14px;
}
.layer select {
  padding-left: 6px;
}
.swatch {
  flex: none;
  width: 17px;
  height: 17px;
  background-color: #000;
  border: 1px solid #fff;
}
.pen {
  display: flex;
  align-items: center;
  width: 83px;
  height: 23px;
  background-color: #292929;
  border: 1px solid #9a9a9a;
}
.pen select {
  height: 21px;
  padding-left: 2px;
}
.pen .pen-color {
  background-color: #000;
  padding: 0;
  text-align: center;
  text-align-last: center;
}
.pen-line span {
  flex: 1;
  height: 1px;
  margin: 0 3px;
  background-color: #fff;
}
.combo {
  display: flex;
  align-items: center;
  width: 99px;
  height: 25px;
  margin-right: 1px;
  border: 1px solid #8c8c8c;
}
.combo::after {
  content: "";
  flex: none;
  margin-right: 4px;
  border: 4px solid transparent;
  border-top-color: #a2a2a2;
  border-bottom: none;
}
.combo select {
  height: 19px;
  margin: 0 8px 0 2px;
}
.combo-style {
  width: 301px;
}
.combo-wide {
  width: 117px;
}
.combo-fill select {
  background-color: #7a7a7a;
}

/* workspace */
.workspace {
  display: flex;
  flex: 1 0 516px;
  height: 516px;
}
.side-toolbar {
  display: flex;
  flex-direction: column;
  flex: none;
  width: 33px;
  padding: 1px 0 0 2px;
  background-color: #464646;
  border-left: 1px solid #7c7c7c;
}
.side-toolbar .sep {
  width: 20px;
  height: 1px;
  margin: 3px 0 2px 4px;
}
.side-toolbar-right {
  width: 30px;
  padding-left: 1px;
}
.drawing {
  display: flex;
  flex-direction: column;
  flex: 1;
  min-width: 0;
  background-color: #555;
  border-top: 1px solid #7c7c7c;
}
.rulers {
  display: grid;
  grid-template-columns: 16px 1fr;
  grid-template-rows: 15px 1fr;
  flex: 1;
  min-height: 0;
}
.ruler-origin {
  background-color: #b9b7a8;
}
.ruler-origin svg {
  width: 14px;
  height: 14px;
}
.ruler-top, .ruler-left, .canvas {
  width: 100%;
  height: 100%;
  min-height: 0;
}
.ruler-top {
  border-bottom: 1px solid #909090;
}
.ruler-left {
  border-right: 1px solid #c8c8c8;
}
.ruler-top text, .ruler-left text {
  font-size: 8px;
  fill: #e2e2e2;
}
.canvas {
  background-color: #fff;
}
.canvas text {
  font-size: 7px;
  font-weight: 700;
  text-anchor: middle;
  fill: #c928c9;
}
.sheets {
  display: flex;
  align-items: stretch;
  height: 17px;
  padding-left: 20px;
}
.sheet {
  display: flex;
  align-items: center;
  gap: 3px;
  width: 65px;
  padding-left: 4px;
  background-color: #4c4c4c;
  border: 1px solid #3c3c3c;
  border-top: none;
  color: #9a9a9a;
  line-height: 15px;
}
.sheet + .sheet {
  width: 71px;
}
.sheet svg {
  width: 14px;
  height: 14px;
}
.sheet-active {
  background-color: #5a5a5a;
  border-color: #000;
  border-radius: 0 0 3px 3px;
  color: #f2f2f2;
}
.splitter {
  width: 3px;
  margin: 0 2px 0 24px;
  background-color: #f2f2f2;
}
.scroll-button {
  display: flex;
  align-items: center;
  justify-content: center;
  width: 17px;
  height: 17px;
  background-color: #4c4c4c;
  border: 1px solid #3a3a3a;
}
.scroll-button::before {
  content: "";
  border: 3px solid transparent;
}
.left::before {
  border-left: none;
  border-right-color: #fff;
}
.up::before {
  border-top: none;
  border-bottom-color: #fff;
}
.down::before {
  border-bottom: none;
  border-top-color: #fff;
}
.h-track {
  flex: 1;
  background-color: #6e6e6e;
}
.h-thumb {
  width: 135px;
  background-color: #505050;
  border: 1px solid #3a3a3a;
}

/* selection info */
.panel {
  display: flex;
  flex-direction: column;
  flex: none;
  width: 440px;
  margin-left: 3px;
  padding: 0 2px 3px 4px;
  background-color: #555;
  border-top: 1px solid #000;
  border-left: 1px solid #222;
}
.panel-title {
  display: flex;
  align-items: center;
  gap: 4px;
  height: 19px;
}
.panel-title h1 {
  flex: 1;
  margin: 0;
  font-size: 12px;
  font-weight: 400;
}
.panel-tools {
  display: flex;
  gap: 1px;
  padding: 3px 0 7px 3px;
  stroke: #0a0a0a;
  stroke-width: 2;
}
.tool-text {
  color: #0a0a0a;
  font-size: 16px;
  font-weight: 700;
}
.panel-tools .formula {
  fill: #1414dc;
  font-style: italic;
}
.pressed {
  border: 1px solid #9db4d4;
  background: repeating-conic-gradient(#8c8c8c 0 25%, #686868 0 50%) 0 0 / 2px 2px;
}
.tree {
  display: flex;
  align-items: flex-start;
  flex: none;
  height: 87px;
  margin: 0 18px 4px 1px;
  padding: 1px 0 0 11px;
  background-color: #292929;
  border: 1px solid #9a9a9a;
  stroke-width: 1;
}
.tree svg {
  width: 16px;
  height: 14px;
  margin-top: 2px;
}
.tree-line {
  width: 12px;
  margin-top: 9px;
  border-top: 1px dotted #8a8a8a;
}
.tree-label {
  margin-left: 3px;
  padding: 0 1px 0 2px;
  border: 1px solid #8cb0e0;
}
.panel-tabs {
  display: flex;
  align-items: flex-end;
  flex: none;
  height: 21px;
  border-top: 1px solid #7c7c7c;
}
.panel-tab {
  height: 16px;
  padding: 0 3px;
  border: 1px solid #333;
  border-top-color: #8a8a8a;
  border-bottom: none;
  background-color: #4a4a4a;
  color: #999;
  line-height: 14px;
}
.panel-tab-active {
  padding: 0 4px 0 6px;
  background: none;
  border-color: transparent;
  color: #f2f2f2;
}
.props {
  display: flex;
  flex: 1;
  min-height: 0;
  border-top: 1px solid #8a8a8a;
}
.props-view {
  flex: 1;
  overflow: hidden;
}
.props table {
  width: 100%;
  table-layout: fixed;
  border-collapse: separate;
  border-spacing: 0;
  background-color: #292929;
}
.props th {
  height: 17px;
  padding: 0 6px;
  background-color: #555;
  border-right: 1px solid #9a9a9a;
  font-weight: 400;
  text-align: left;
}
.props th:first-child {
  width: 52%;
}
.prop-head {
  display: flex;
  align-items: center;
  justify-content: space-between;
}
.prop-head svg {
  width: 10px;
  height: 8px;
}
.props td {
  height: 20px;
  padding: 0 0 0 1px;
  border-right: 1px solid #9a9a9a;
  border-bottom: 1px solid #9a9a9a;
  line-height: 16px;
  vertical-align: top;
}
.props td:first-child {
  padding: 0;
  background:
    repeating-linear-gradient(#8a8a8a 0 1px, transparent 1px 2px) 12px 0 / 1px 100% no-repeat,
    repeating-linear-gradient(#8a8a8a 0 1px, transparent 1px 2px) 31px 0 / 1px 100% no-repeat;
}
.props td div {
  display: flex;
  align-items: center;
  height: 19px;
  padding-left: 32px;
  white-space: nowrap;
}
.props td div::before {
  content: "";
  width: 8px;
  margin-right: 3px;
  border-top: 1px dotted #8a8a8a;
}
.props .group td {
  font-weight: 700;
}
.props .group td:first-child {
  background: repeating-linear-gradient(#8a8a8a 0 1px, transparent 1px 2px) 12px 0 / 1px 100% no-repeat;
}
.props .first td {
  height: 18px;
}
.props .first div {
  height: 17px;
}
.props .group div {
  padding-left: 8px;
}
.props .group div::before {
  width: 4px;
}
.group i {
  order: -1;
  width: 9px;
  height: 9px;
  border: 1px solid #999;
  background:
    linear-gradient(#222, #222) center / 5px 1px no-repeat,
    linear-gradient(#222, #222) center / 1px 5px no-repeat,
    #eee;
}
.open i {
  background: linear-gradient(#222, #222) center / 5px 1px no-repeat, #eee;
}
.selected span {
  flex: 1;
  height: 17px;
  background-color: #8cafdf;
  color: #10182c;
}
.props input {
  appearance: none;
  display: block;
  width: 17px;
  height: 17px;
  margin-top: 1px;
  border: 1px solid #ccc;
  border-top-color: #777;
  border-left-color: #777;
  background: #fff url("data:image/svg+xml,%3Csvg xmlns='http://www.w3.org/2000/svg' viewBox='0 0 15 15'%3E%3Cpath d='M4 6l2 3 5-5' fill='none' stroke='%23000' stroke-width='2'/%3E%3C/svg%3E") center / 15px 15px no-repeat;
}
.v-scroll {
  display: flex;
  flex-direction: column;
  width: 18px;
  padding-top: 17px;
  background-color: #6e6e6e;
}
.v-thumb {
  width: 17px;
  height: 17px;
  margin: 13px 0 auto;
  background-color: #555;
  border: 1px solid #444;
}
.panel-status {
  flex: none;
  height: 32px;
  margin: 5px 0 0;
  padding-left: 4px;
  background-color: #292929;
}

/* docked palettes */
.side-tabs {
  display: flex;
  flex-direction: column;
  flex: none;
  gap: 1px;
  width: 31px;
  padding: 2px 0 0 4px;
  background-color: #555;
  border-right: 2px solid #7c7c7c;
}
.side-tab {
  display: flex;
  flex-direction: column;
  align-items: center;
  gap: 2px;
  padding: 3px 0;
  background-color: #4c4c4c;
  border: 1px solid #7c7c7c;
  border-right: none;
  border-bottom-color: #222;
  border-radius: 3px 0 0 3px;
}
.side-tab svg {
  width: 20px;
  height: 20px;
}
.side-tab-active {
  height: 178px;
  background-color: #555;
}
.side-tab span {
  writing-mode: vertical-rl;
}

/* inspector bar */
.inspector {
  display: flex;
  align-items: center;
  height: 43px;
  background-color: #4a4a4a;
  border-top: 1px solid #808080;
}
.fields {
  display: flex;
  gap: 3px;
  padding-left: 2px;
}
.field {
  display: block;
  width: 67px;
}
.field > span:first-child {
  display: block;
  height: 16px;
  overflow: hidden;
  white-space: nowrap;
}
.box {
  display: flex;
  height: 22px;
  background-color: #292929;
  border: 1px solid #9a9a9a;
}
.box input {
  flex: 1;
  min-width: 0;
  padding: 0 0 2px 3px;
}
.spin {
  width: 16px;
  background:
    conic-gradient(from 135deg at 50% 0, #fff 90deg, transparent 0) 6px 5px / 4px 2px no-repeat,
    conic-gradient(from -45deg at 50% 100%, #fff 90deg, transparent 0) 6px 14px / 4px 2px no-repeat,
    linear-gradient(#303030, #303030) 0 9px / 100% 1px no-repeat,
    #505050;
}
.inspector-tools {
  display: flex;
  align-items: center;
  stroke: #0a0a0a;
}

/* status bar */
.statusbar {
  display: flex;
  align-items: center;
  gap: 8px;
  height: 25px;
  padding: 0 14px 0 8px;
  background-color: #535353;
}
.hint, .zoom, .clock {
  padding-bottom: 6px;
}
.hint {
  flex: 1;
}
.coord {
  display: flex;
  align-items: center;
  gap: 2px;
}
.coord:first-of-type {
  margin-left: 8px;
}
.axis {
  width: 8px;
  font-size: 8px;
  line-height: 9px;
  text-align: center;
}
.axis::before {
  content: "";
  display: block;
  width: 7px;
  height: 7px;
  border: 1px solid #f2f2f2;
}
.coord input {
  width: 73px;
  height: 19px;
  padding-left: 3px;
  background-color: #292929;
  border: 1px solid #9a9a9a;
}
.coord-off {
  color: #999;
}
.coord-off .axis::before {
  border-color: #999;
}
.clock {
  margin-left: 24px;
}
```

FILE: script.js
```js
const NS = 'http://www.w3.org/2000/svg';
const STEP = 39.25; // pixels per inch at 41%

function add(parent, name, attrs, text) {
  const el = document.createElementNS(NS, name);
  for (const key in attrs) el.setAttribute(key, attrs[key]);
  if (text) el.textContent = text;
  parent.appendChild(el);
}

function line(parent, x1, y1, x2, y2, color, width) {
  add(parent, 'line', { x1, y1, x2, y2, stroke: color, 'stroke-width': width });
}

// rulers
const rulerTop = document.getElementById('rulerTop');
const rulerWidth = rulerTop.getBoundingClientRect().width;
for (let i = -5; 206 + i * STEP < rulerWidth; i++) {
  const x = Math.round(206 + i * STEP) + 0.5;
  const major = i % 10 === 0;
  line(rulerTop, x, major ? 1 : 10, x, 14, '#fff', 1);
  if (major) add(rulerTop, 'text', { x: x + 2, y: 9 }, i + ' in');
}

const rulerLeft = document.getElementById('rulerLeft');
for (let i = -2; i <= 9; i++) {
  const y = Math.round(398 - i * STEP) + 0.5;
  line(rulerLeft, i === 0 ? 2 : 12, y, 15, y, '#fff', 1);
}
add(rulerLeft, 'text', { x: 0, y: 0, transform: 'translate(10 396) rotate(-90)' }, '0 in');
line(rulerLeft, 0, 141.5, 16, 141.5, '#5f9a5f', 1);

// column and row grid
const canvas = document.getElementById('canvas');
const rows = ['F', 'E', 'D', 'C', 'B', 'A'];
const COLOR = '#d622d6';

function bubble(x, y, label) {
  add(canvas, 'circle', { cx: x, cy: y, r: 10, fill: '#fff', stroke: COLOR, 'stroke-width': 2 });
  add(canvas, 'text', { x: x, y: y + 3 }, label);
}

rows.forEach((label, i) => {
  const y = Math.round(134 + i * STEP);
  line(canvas, 123, y, 691, y, '#c026c0', 2);
  bubble(113, y, label);
  bubble(701, y - 1, label);
});

for (let i = 0; i < 14; i++) {
  const x = Math.round(152 + i * STEP);
  line(canvas, x, 105, x, 360, COLOR, 2);
  bubble(x, 95, String(i + 1));
  bubble(x, 370, String(i + 1));
}

// selection frame and handles
add(canvas, 'rect', { x: 102.5, y: 84.5, width: 609, height: 295, fill: 'none', stroke: '#000' });
line(canvas, 406, 232.5, 726, 232.5, '#000', 1);
[[102, 84], [406, 84], [710, 84], [102, 231], [710, 231], [102, 379], [406, 379], [710, 379]].forEach(([x, y]) => {
  add(canvas, 'rect', { x: x - 3.5, y: y - 3.5, width: 7, height: 7, fill: '#0000e0', stroke: '#000' });
});
add(canvas, 'circle', { cx: 406, cy: 231, r: 3.5, fill: '#ffff20', stroke: '#000' });
add(canvas, 'circle', { cx: 726, cy: 231, r: 3.5, fill: '#14d030', stroke: '#000' });
```
